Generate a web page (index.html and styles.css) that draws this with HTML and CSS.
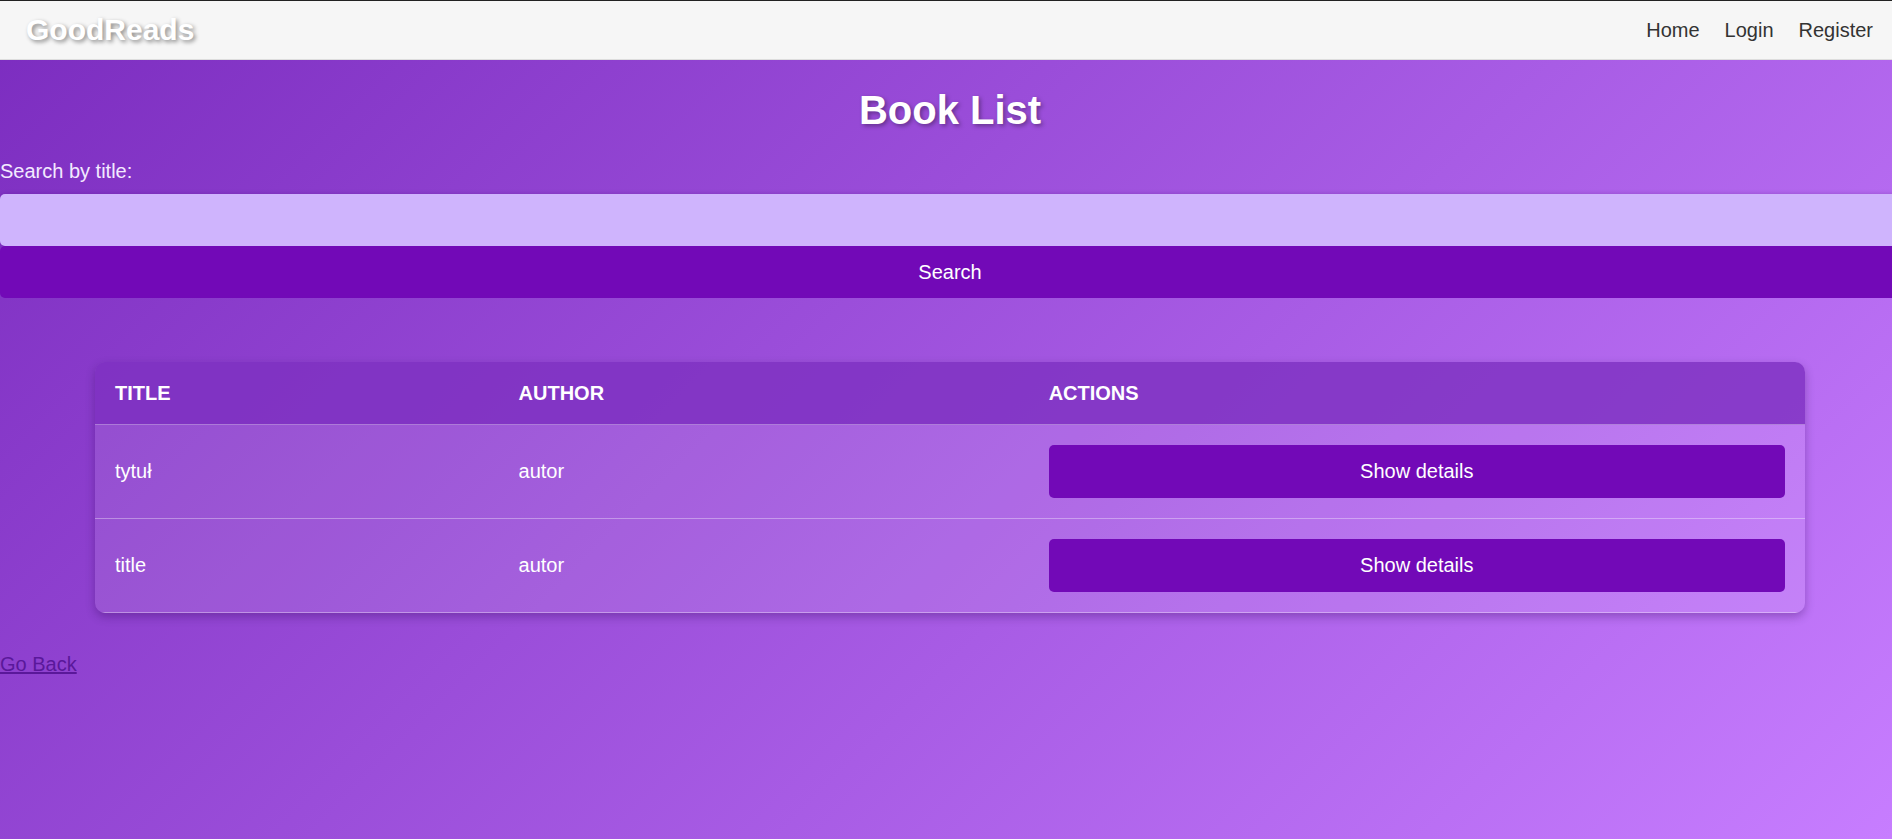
FILE: index.html
```html
<!DOCTYPE html>
<html lang="en">
<head>
<meta charset="utf-8">
<title>GoodReads - Book List</title>
<link rel="stylesheet" href="styles.css">
</head>
<body>
<nav class="navbar">
  <div class="logo">GoodReads</div>
  <ul class="nav-links">
    <li><a href="#">Home</a></li>
    <li><a href="#">Login</a></li>
    <li><a href="#">Register</a></li>
  </ul>
</nav>
<main class="content">
  <h1 class="page-title">Book List</h1>
  <form class="search-form">
    <label class="search-label" for="q">Search by title:</label>
    <input class="search-input" id="q" type="text">
    <button class="search-button" type="button">Search</button>
  </form>
  <div class="table-wrap">
    <table class="book-table">
      <thead>
        <tr>
          <th class="col-title">Title</th>
          <th class="col-author">Author</th>
          <th class="col-actions">Actions</th>
        </tr>
      </thead>
      <tbody>
        <tr>
          <td>tytuł</td>
          <td>autor</td>
          <td><button class="details-button" type="button">Show details</button></td>
        </tr>
        <tr>
          <td>title</td>
          <td>autor</td>
          <td><button class="details-button" type="button">Show details</button></td>
        </tr>
      </tbody>
    </table>
  </div>
  <a class="back-link" href="#">Go Back</a>
</main>
</body>
</html>
```
FILE: styles.css
```css
html {
  height: 100%;
  overflow-x: hidden;
}

body {
  margin: 0;
  min-height: 100%;
  overflow-x: hidden;
  font-family: "Liberation Sans", Arial, sans-serif;
  font-size: 20px;
  color: #ffffff;
  background: linear-gradient(135deg, #7b2cbf 0%, #c77dff 100%);
}

.navbar {
  display: flex;
  align-items: center;
  justify-content: space-between;
  height: 58px;
  border-top: 1px solid #222222;
  border-bottom: 1px solid #dddddd;
  background: #f6f6f6;
  padding: 0 19px 0 26px;
}

.logo {
  font-size: 30px;
  font-weight: bold;
  color: #ffffff;
  text-shadow: 2px 2px 4px rgba(0, 0, 0, 0.45);
}

.nav-links {
  display: flex;
  gap: 25px;
  list-style: none;
  margin: 0;
  padding: 0;
}

.nav-links a {
  color: #333333;
  text-decoration: none;
  font-size: 20px;
}

.content {
  display: flex;
  flex-direction: column;
  width: calc(100% + 8px);
}

.page-title {
  margin: 27px 0;
  font-size: 40px;
  line-height: 46px;
  text-align: center;
  color: #ffffff;
  text-shadow: 2px 2px 4px rgba(0, 0, 0, 0.35);
}

.search-form {
  display: flex;
  flex-direction: column;
}

.search-label {
  display: block;
  line-height: 23px;
  margin-bottom: 11px;
  color: #f3eaff;
}

.search-input {
  width: calc(100% + 30px);
  box-sizing: border-box;
  height: 52px;
  border: none;
  border-radius: 5px;
  background: #cfb4fd;
  box-shadow: 0 0 4px rgba(60, 9, 108, 0.25);
  font-family: inherit;
  font-size: 20px;
  padding: 0 15px;
  outline: none;
}

.search-button {
  width: 100%;
  height: 52px;
  border: none;
  border-radius: 5px;
  background: #7209b7;
  color: #ffffff;
  font-family: inherit;
  font-size: 20px;
  padding: 0;
}

.table-wrap {
  width: 90%;
  margin: 64px auto 40px;
}

.book-table {
  width: 100%;
  border-collapse: separate;
  border-spacing: 0;
  border-radius: 10px;
  overflow: hidden;
  box-shadow: 0 4px 10px rgba(40, 0, 80, 0.3);
  background: rgba(255, 255, 255, 0.1);
}

.book-table th {
  background: rgba(123, 44, 191, 0.8);
  text-align: left;
  text-transform: uppercase;
  font-weight: bold;
  padding: 20px 20px 19px 20px;
  line-height: 23px;
  border-bottom: 1px solid rgba(255, 255, 255, 0.35);
}

.col-title { width: 23.6%; }
.col-author { width: 31%; }
.col-actions { width: 45.4%; }

.book-table td {
  padding: 20px;
  line-height: 23px;
  vertical-align: middle;
  border-bottom: 1px solid rgba(255, 255, 255, 0.35);
}

.details-button {
  display: block;
  width: 100%;
  height: 53px;
  border: none;
  border-radius: 5px;
  background: #7209b7;
  color: #ffffff;
  font-family: inherit;
  font-size: 20px;
  padding: 0;
}

.back-link {
  align-self: flex-start;
  color: #5a189a;
  font-size: 20px;
  line-height: 23px;
}
```
